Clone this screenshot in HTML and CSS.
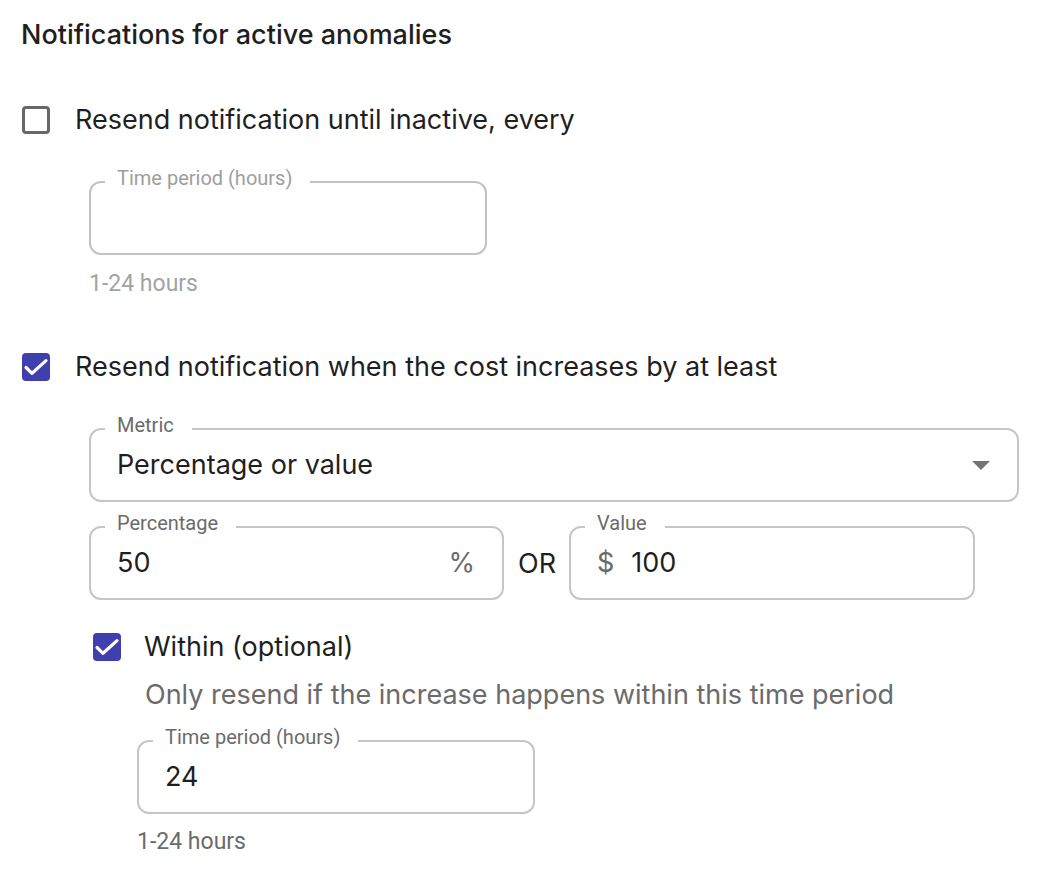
FILE: index.html
```html
<!DOCTYPE html>
<html lang="en">
<head>
<meta charset="utf-8">
<title>Notifications for active anomalies</title>
<link rel="stylesheet" href="styles.css">
</head>
<body>
<div class="page">
  <h2 class="title">Notifications for active anomalies</h2>

  <label class="check-row">
    <span class="box"></span>
    <span class="check-label">Resend notification until inactive, every</span>
  </label>
  <div class="indent">
    <fieldset class="field field-disabled w-time">
      <legend>Time period (hours)</legend>
      <div class="field-content"></div>
    </fieldset>
    <div class="helper helper-disabled">1-24 hours</div>
  </div>

  <label class="check-row row-2">
    <span class="box checked"><svg viewBox="0 0 28 28" width="28" height="28"><path d="M4 14.5l6 5.8L24 7.6" fill="none" stroke="#fff" stroke-width="3.2" stroke-linecap="round" stroke-linejoin="round"/></svg></span>
    <span class="check-label">Resend notification when the cost increases by at least</span>
  </label>
  <div class="indent">
    <fieldset class="field w-metric metric">
      <legend>Metric</legend>
      <div class="field-content">
        <span class="value">Percentage or value</span>
        <span class="caret"></span>
      </div>
    </fieldset>
    <div class="pair">
      <fieldset class="field w-pct">
        <legend>Percentage</legend>
        <div class="field-content">
          <span class="value">50</span>
          <span class="adorn adorn-end">%</span>
        </div>
      </fieldset>
      <span class="or">OR</span>
      <fieldset class="field w-val">
        <legend>Value</legend>
        <div class="field-content start">
          <span class="adorn">$</span>
          <span class="value">100</span>
        </div>
      </fieldset>
    </div>

    <label class="check-row row-3">
      <span class="box checked"><svg viewBox="0 0 28 28" width="28" height="28"><path d="M4 14.5l6 5.8L24 7.6" fill="none" stroke="#fff" stroke-width="3.2" stroke-linecap="round" stroke-linejoin="round"/></svg></span>
      <span class="check-label">Within (optional)</span>
    </label>
    <div class="sub-indent">
      <div class="desc">Only resend if the increase happens within this time period</div>
      <fieldset class="field w-time field-time2">
        <legend>Time period (hours)</legend>
        <div class="field-content">
          <span class="value">24</span>
        </div>
      </fieldset>
      <div class="helper helper-2">1-24 hours</div>
    </div>
  </div>
</div>
</body>
</html>
```

FILE: styles.css
```css
* { box-sizing: border-box; }
html, body { margin: 0; padding: 0; background: #fff; }
body {
  font-family: Inter, "Noto Sans", "Liberation Sans", sans-serif;
  color: #1f1f1f;
}
.page { padding: 19px 0 0 0; }

.title {
  margin: 0 0 0 21px;
  font-size: 27px;
  line-height: 32px;
  font-weight: 500;
  color: #1f1f1f;
}

.check-row {
  display: flex;
  align-items: center;
  height: 40px;
  margin: 49px 0 0 22px;
  gap: 25px;
}
.row-2 { margin-top: 49px; }
.row-3 { margin: 27px 0 0 4px; gap: 23px; }

.box {
  width: 28px;
  height: 28px;
  flex: none;
  border: 3px solid #686868;
  border-radius: 4px;
  display: flex;
  align-items: center;
  justify-content: center;
}
.box.checked {
  background: #3f3fae;
  border: 0;
}
.box svg { display: block; }
.check-label {
  font-size: 27px;
  line-height: 32px;
  color: #1f1f1f;
}

.indent { margin-left: 89px; }

.field {
  margin: 28px 0 0 0;
  padding: 0 26px 13px 26px;
  border: 2px solid #c6c6c6;
  border-radius: 12px;
  min-width: 0;
}
.field legend {
  font-family: Roboto, "Liberation Sans", sans-serif;
  font-size: 20px;
  line-height: 20px;
  color: #6b6b6b;
  padding: 0 18px 8px 12px;
  margin-left: -12px;
}
.field-disabled legend { color: #9e9e9e; }
.field-disabled { border-color: #c2c2c2; }

.field-content {
  height: 44px;
  display: flex;
  align-items: center;
  justify-content: space-between;
}
.field-content.start { justify-content: flex-start; gap: 17px; }

.value {
  font-size: 27px;
  line-height: 32px;
  color: #1f1f1f;
}
.adorn {
  font-size: 27px;
  line-height: 32px;
  color: #6b6b6b;
}
.adorn-end { margin-right: 1px; }

.w-time { width: 398px; }
.w-metric { width: 930px; }
.w-pct { width: 415px; }
.w-val { width: 406px; }

.caret {
  width: 0;
  height: 0;
  border-left: 9px solid transparent;
  border-right: 9px solid transparent;
  border-top: 9px solid #737373;
  margin-right: 1px;
}

.pair {
  display: flex;
  align-items: flex-end;
  margin-top: 11px;
}
.pair .field { margin: 0; flex: none; }
.or {
  font-size: 27px;
  line-height: 32px;
  color: #1f1f1f;
  margin: 0 13px 20px 14px;
}

.helper {
  font-family: Roboto, "Liberation Sans", sans-serif;
  font-size: 23px;
  line-height: 28px;
  color: #6b6b6b;
  margin-top: 16px;
}
.helper-disabled { color: #a3a3a3; margin-top: 15px; }

.sub-indent { margin-left: 48px; }
.desc {
  font-size: 27px;
  line-height: 32px;
  color: #6b6b6b;
  margin: 12px 0 0 8px;
}
.field-time2 { margin-top: 16px; }
.helper-2 { margin-top: 14px; }
```
